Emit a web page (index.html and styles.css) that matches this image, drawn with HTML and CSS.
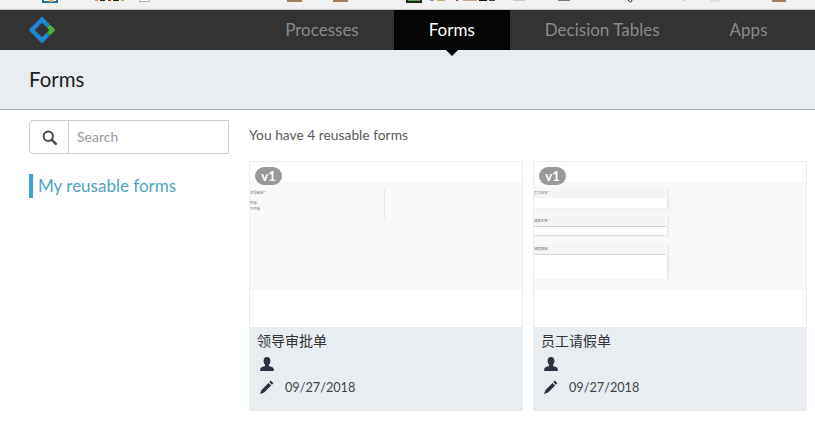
FILE: index.html
```html
<!DOCTYPE html>
<html lang="en">
<head>
<meta charset="utf-8">
<title>Forms</title>
<link rel="stylesheet" href="styles.css">
</head>
<body>
<div class="browser-strip">
  <svg class="strip-art" width="815" height="9" viewBox="0 0 815 9" aria-hidden="true">
    <path d="M43 0v2h14V0" fill="#fff" stroke="#1a6fc0" stroke-width="2"/>
    <rect x="49" y="0" width="4" height="2" fill="#e9b24a"/>
    <rect x="95" y="0" width="3" height="1" fill="#d39a2c"/><rect x="100" y="0" width="5" height="1" fill="#2b2b2b"/>
    <rect x="108" y="0" width="3" height="1" fill="#b03030"/><rect x="113" y="0" width="6" height="1" fill="#222"/><rect x="121" y="0" width="3" height="1" fill="#c79a30"/>
    <path d="M139.500 0v1.500h10V0" fill="#fff" stroke="#aaa"/>
    <rect x="287" y="0" width="15" height="2" fill="#a67f5a"/><rect x="333" y="0" width="15" height="2" fill="#a67f5a"/>
    <rect x="406" y="0" width="16" height="3" fill="#222"/><rect x="408" y="0" width="12" height="1" fill="#59a85c"/>
    <rect x="430" y="0" width="4" height="1" fill="#8a9ac0"/><rect x="437" y="0" width="8" height="1" fill="#c9a778"/><rect x="456" y="0" width="2" height="1" fill="#a01fa0"/>
    <rect x="463" y="0" width="14" height="1" fill="#c9a778"/><rect x="479" y="0" width="8" height="1" fill="#111"/><rect x="489" y="0" width="6" height="1" fill="#444"/>
    <rect x="513" y="0" width="12" height="1" fill="#c3cad8"/>
    <rect x="558" y="0" width="12" height="1" fill="#777"/><path d="M628 0q3 4 4 0" fill="none" stroke="#222"/>
    <rect x="683" y="0" width="2" height="1" fill="#e8c49a"/><rect x="710" y="0" width="10" height="2" fill="#dde0ea"/>
    <rect x="772" y="0" width="14" height="2" fill="#a67f5a"/>
  </svg>
</div>

<header class="navbar">
  <a class="logo" href="#" aria-label="Home">
    <svg width="26" height="26" viewBox="0 0 26 26">
      <path d="M19.200 8.700 13 2.600 2.600 13 13 23.400l6.200-6.100" fill="none" stroke="#1f86d0" stroke-width="4.400"/>
      <path d="M19.500 9 23.400 13l-3.900 4" fill="none" stroke="#4cb13a" stroke-width="4.400"/>
    </svg>
  </a>
  <nav class="nav-items">
    <a class="nav-item" href="#">Processes</a>
    <a class="nav-item active" href="#">Forms</a>
    <a class="nav-item" href="#">Decision Tables</a>
    <a class="nav-item" href="#">Apps</a>
  </nav>
</header>

<div class="subheader"><h1 class="page-title">Forms</h1></div>

<main class="content">
  <aside class="sidebar">
    <div class="search">
      <span class="search-addon">
        <svg width="15" height="15" viewBox="0 0 15 15"><circle cx="6.300" cy="6.300" r="4.700" fill="none" stroke="#4a4a4a" stroke-width="2"/><path d="m9.800 9.800 4 4" stroke="#4a4a4a" stroke-width="2.400" stroke-linecap="round"/></svg>
      </span>
      <input class="search-input" type="text" placeholder="Search">
    </div>
    <a class="filter active" href="#">My reusable forms</a>
  </aside>

  <section class="forms">
    <p class="summary">You have 4 reusable forms</p>
    <div class="cards">
      <article class="card">
        <div class="card-top"><span class="badge">v1</span></div>
        <div class="preview">
          <div class="sheet">
            <div class="mini-label">领导审批 *</div>
            <div class="mini-option first">同意</div>
            <div class="mini-option">不同意</div>
          </div>
        </div>
        <div class="card-gap"></div>
        <div class="card-info">
          <div class="card-name">领导审批单</div>
          <div class="card-row">
            <svg class="icon" width="14" height="14" viewBox="0 0 14 14"><path fill="#2c3340" d="M7 0c2.300 0 3.400 1.700 3.400 3.900 0 1.500-.6 3-1.400 3.800v1.200c1.800.7 4.500 1.200 4.800 3V14H.2v-2.100c.3-1.800 3-2.300 4.800-3V7.700C4.200 6.900 3.600 5.400 3.600 3.900 3.600 1.700 4.700 0 7 0z"/></svg>
          </div>
          <div class="card-row">
            <svg class="icon" width="14" height="14" viewBox="0 0 14 14"><path fill="#2c3340" d="M10.800.6 13.400 3.200 11.900 4.700 9.300 2.100zM8.500 2.900l2.600 2.600-7 7L0 14l1.500-4.100z"/></svg>
            <span class="card-date">09/27/2018</span>
          </div>
        </div>
      </article>

      <article class="card">
        <div class="card-top"><span class="badge">v1</span></div>
        <div class="preview">
          <div class="sheet-fields">
            <div class="field"><div class="mini-label">员工姓名 *</div><div class="mini-input"></div></div>
            <div class="field"><div class="mini-label">请假天数 *</div><div class="mini-input lined"></div></div>
            <div class="field tall"><div class="mini-label">请假原因</div><div class="mini-input lined"></div></div>
          </div>
        </div>
        <div class="card-gap"></div>
        <div class="card-info">
          <div class="card-name">员工请假单</div>
          <div class="card-row">
            <svg class="icon" width="14" height="14" viewBox="0 0 14 14"><path fill="#2c3340" d="M7 0c2.300 0 3.400 1.700 3.400 3.900 0 1.500-.6 3-1.400 3.800v1.200c1.800.7 4.500 1.200 4.800 3V14H.2v-2.100c.3-1.800 3-2.300 4.800-3V7.700C4.200 6.900 3.600 5.400 3.600 3.900 3.600 1.700 4.700 0 7 0z"/></svg>
          </div>
          <div class="card-row">
            <svg class="icon" width="14" height="14" viewBox="0 0 14 14"><path fill="#2c3340" d="M10.800.6 13.400 3.200 11.900 4.700 9.300 2.100zM8.500 2.900l2.600 2.600-7 7L0 14l1.500-4.100z"/></svg>
            <span class="card-date">09/27/2018</span>
          </div>
        </div>
      </article>
    </div>
  </section>
</main>
</body>
</html>
```

FILE: styles.css
```css
* { box-sizing: border-box; }

html, body { margin: 0; padding: 0; }

body {
  width: 815px;
  height: 436px;
  overflow: hidden;
  background: #fff;
  color: #333;
  font-family: Lato, "Noto Sans CJK SC", sans-serif;
}

a { text-decoration: none; }

.browser-strip {
  height: 10px;
  background: #f1f1f1;
  border-bottom: 1px solid #c9c9c9;
}

.strip-art { display: block; }

.navbar {
  display: flex;
  justify-content: space-between;
  height: 40px;
  padding-right: 12.500px;
  background: #333;
}

.logo {
  display: flex;
  align-items: center;
  margin-left: 29px;
}

.nav-items { display: flex; }

.nav-item {
  position: relative;
  padding: 0 35px;
  color: #8a8a8a;
  font-size: 17px;
  line-height: 40px;
}

.nav-item.active {
  background: #050505;
  color: #fff;
}

.nav-item.active::after {
  content: "";
  position: absolute;
  left: 50%;
  bottom: -6px;
  margin-left: -6px;
  border-style: solid;
  border-width: 6px 6px 0;
  border-color: #050505 transparent transparent;
}

.subheader {
  height: 60px;
  padding: 17px 0 0 29px;
  background: #e8edf1;
  border-bottom: 1px solid #a9adb3;
}

.page-title {
  margin: 0;
  color: #222;
  font-size: 20.400px;
  font-weight: 400;
  line-height: 25px;
}

.content {
  display: flex;
  padding: 10px 8px 0 29px;
}

.sidebar { width: 200px; margin-right: 20px; }

.search {
  display: flex;
  height: 34px;
  border: 1px solid #ccc;
  border-radius: 4px 0 0 4px;
}

.search-addon {
  display: flex;
  align-items: center;
  justify-content: center;
  width: 39px;
  border-right: 1px solid #ccc;
  flex: none;
}

.search-input {
  flex: 1;
  min-width: 0;
  border: 0;
  padding: 0 8px 2px;
  background: transparent;
  color: #333;
  font-family: inherit;
  font-size: 14px;
  outline: none;
}

.search-input::placeholder { color: #999; opacity: 1; }

.filter {
  display: block;
  height: 24px;
  margin-top: 20px;
  padding-left: 5px;
  border-left: 4px solid #35a7c8;
  color: #4ea4c4;
  font-size: 17px;
  line-height: 24px;
}

.forms { flex: 1; }

.summary {
  margin: 0;
  padding-top: 6px;
  height: 41px;
  color: #5a5a5a;
  font-size: 13.800px;
  line-height: 18px;
}

.cards { display: flex; gap: 10px; }

.card {
  width: 274px;
  height: 250px;
  border: 1px solid #e8edf1;
  display: flex;
  flex-direction: column;
}

.card-top {
  height: 20px;
  padding: 5px 0 0 5px;
}

.badge {
  position: relative;
  z-index: 1;
  display: block;
  width: 27px;
  height: 18px;
  border-radius: 9px;
  background: #999;
  color: #fff;
  font-size: 13px;
  font-weight: 700;
  line-height: 18px;
  text-align: center;
}

.preview {
  height: 108px;
  padding-top: 6px;
  background: #f8f8f8;
  font-family: "Noto Sans CJK SC", sans-serif;
  overflow: hidden;
}

.sheet {
  width: 135px;
  height: 31px;
  border-right: 1px solid #e9e9e9;
  background: #f9f9f9;
}

.mini-label {
  padding-top: 2px;
  color: #777;
  font-size: 3.400px;
  line-height: 6px;
}

.mini-option {
  color: #777;
  font-size: 3.400px;
  line-height: 6px;
}

.mini-option.first { margin-top: 4px; }

.sheet-fields { width: 135px; }

.field {
  height: 22px;
  margin-bottom: 6px;
  border-right: 1px solid #e6e6e6;
  background: #f5f5f5;
  display: flex;
  flex-direction: column;
}

.field.tall { height: 37px; }

.mini-input {
  flex: 1;
  margin: 2px 2px 2px 0;
  background: #fff;
}

.mini-input.lined {
  border-top: 1px solid #d4d4d4;
  border-bottom: 1px solid #ddd;
}

.field.tall .mini-input.lined { border-bottom: 0; }

.card-gap { height: 37px; background: #fff; }

.card-info {
  flex: 1;
  margin: 0 -1px -1px;
  padding: 2px 8px 0;
  background: #e8edf1;
}

.card-name {
  color: #333;
  font-family: "Noto Sans CJK SC", sans-serif;
  font-size: 14px;
  line-height: 23px;
}

.card-row {
  display: flex;
  align-items: center;
  height: 23px;
  padding-left: 3px;
}

.icon { flex: none; }

.card-date {
  margin-left: 11px;
  color: #444;
  font-size: 12.700px;
}
```
